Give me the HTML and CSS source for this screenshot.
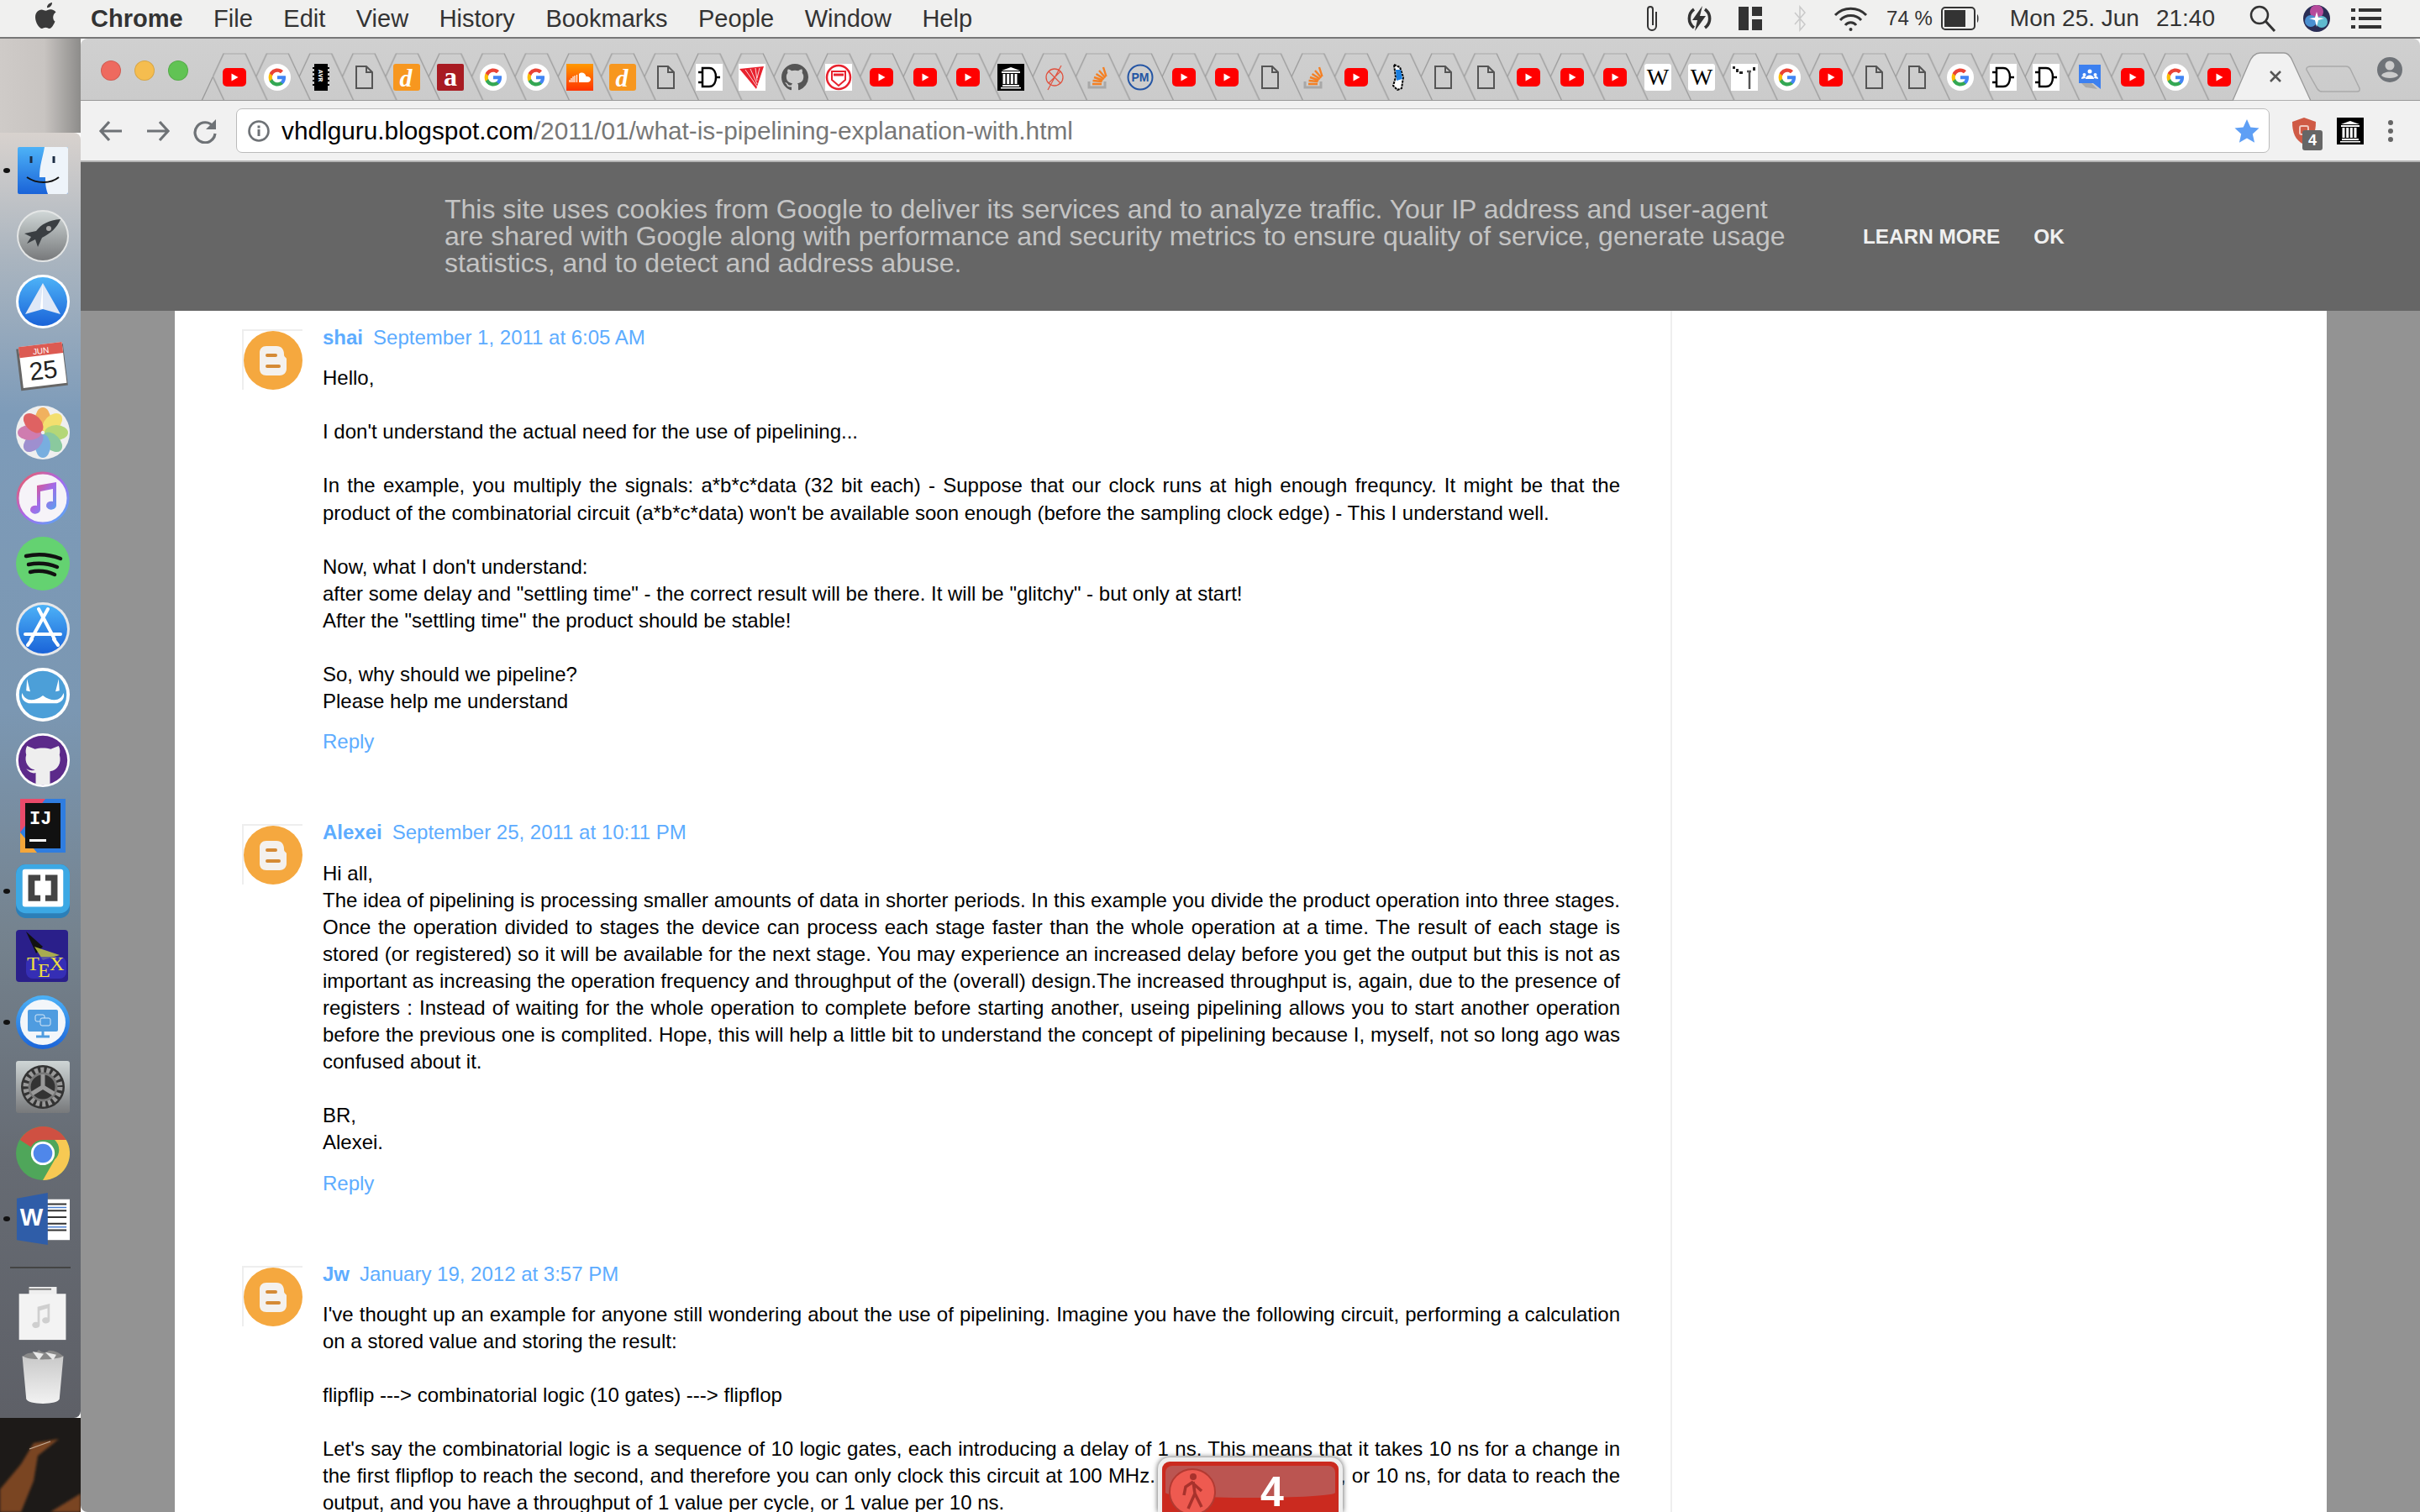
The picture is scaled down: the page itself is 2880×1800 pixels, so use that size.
FILE: index.html
```html
<!DOCTYPE html>
<html>
<head>
  <title>What is pipelining? Explanation with a simple example in VHDL</title>
  <link rel="stylesheet" href="styles.css">
</head>
<body>
  <svg class="defs" width="0" height="0">
    <defs>
      <symbol id="f-yt" viewBox="0 0 32 32"><rect x="2" y="5" width="28" height="22" rx="5" fill="#f00"/><path d="M12.5 11.5l8 4.5-8 4.500z" fill="#fff"/></symbol>
      <symbol id="f-g" viewBox="0 0 48 48"><circle cx="24" cy="24" r="24" fill="#fff"/><g transform="translate(7 7) scale(.71)"><path fill="#4285F4" d="M45.120 24.500c0-1.560-.14-3.060-.4-4.500H24v8.510h11.840c-.51 2.750-2.060 5.080-4.390 6.640v5.520h7.110c4.160-3.830 6.560-9.470 6.560-15.170z"/><path fill="#34A853" d="M24 46c5.940 0 10.920-1.970 14.560-5.330l-7.110-5.520c-1.970 1.320-4.490 2.100-7.450 2.100-5.730 0-10.580-3.870-12.310-9.070H4.340v5.700C7.960 41.070 15.400 46 24 46z"/><path fill="#FBBC05" d="M11.690 28.180C11.250 26.860 11 25.450 11 24s.25-2.860.69-4.180v-5.700H4.340C2.850 17.090 2 20.450 2 24c0 3.550.85 6.910 2.340 9.880l7.350-5.700z"/><path fill="#EA4335" d="M24 10.750c3.230 0 6.130 1.110 8.410 3.290l6.310-6.310C34.910 4.180 29.930 2 24 2 15.400 2 7.960 6.930 4.340 14.120l7.350 5.700c1.730-5.200 6.580-9.070 12.310-9.070z"/></g></symbol>
      <symbol id="f-chip" viewBox="0 0 32 32"><rect x="8" y="0" width="16" height="32" fill="#000"/><path d="M6 4h2v2H6zM6 9h2v2H6zM6 14h2v2H6zM6 19h2v2H6zM6 24h2v2H6zM24 4h2v2h-2zM24 9h2v2h-2zM24 14h2v2h-2zM24 19h2v2h-2zM24 24h2v2h-2z" fill="#000"/><text transform="translate(12.500 7) rotate(90)" class="chip-text">AVR</text></symbol>
      <symbol id="f-file" viewBox="0 0 32 32"><path d="M7 3h12l7 7v19H7zM19 3v7h7" fill="none" stroke="#555" stroke-width="2"/></symbol>
      <symbol id="f-d" viewBox="0 0 32 32"><rect width="32" height="32" rx="3" fill="#f7971f"/><text x="15" y="27" class="d-text">d</text></symbol>
      <symbol id="f-a" viewBox="0 0 32 32"><rect width="32" height="32" rx="2" fill="#a81b22"/><text x="16" y="26" class="a-text">a</text></symbol>
      <symbol id="f-sc" viewBox="0 0 32 32"><rect width="32" height="32" fill="url(#sc-grad)"/><path d="M15 12c3-3 8-1 8.500 3 3-.5 5.500 1.500 5.500 3.500S27 22 25 22H15z" fill="#fff"/><path d="M4 19v3M6 17v5M8 15v7M10 14v8M12.500 13v9" stroke="#fff" stroke-width="1.200"/></symbol>
      <symbol id="f-gate" viewBox="0 0 32 32"><rect width="32" height="32" fill="#fff"/><path d="M8 5h8c6 0 8 6 8 11s-2 11-8 11H8zM3 10h5M3 22h5M24 16h5" fill="none" stroke="#000" stroke-width="2.500"/></symbol>
      <symbol id="f-fan" viewBox="0 0 32 32"><rect width="32" height="32" fill="#fff"/><path d="M1 6l29-3-9 27z" fill="#e8222e"/><path d="M8 7l14 20M14 6l8 18M20 5l2 15M25 5l-3 12" stroke="#fff" stroke-width=".8"/></symbol>
      <symbol id="f-gh" viewBox="0 0 16 16"><path fill="#555" d="M8 0C3.580 0 0 3.580 0 8c0 3.540 2.290 6.530 5.470 7.590.4.07.55-.17.55-.38 0-.19-.01-.82-.01-1.490-2.010.37-2.530-.49-2.690-.94-.09-.23-.48-.94-.82-1.130-.28-.15-.68-.52-.01-.53.63-.01 1.080.58 1.230.82.72 1.210 1.870.87 2.330.66.07-.52.28-.87.51-1.070-1.780-.2-3.640-.89-3.640-3.950 0-.87.31-1.590.82-2.150-.08-.2-.36-1.020.08-2.120 0 0 .67-.21 2.200.82.64-.18 1.320-.27 2-.27.68 0 1.360.09 2 .27 1.530-1.040 2.200-.82 2.200-.82.44 1.100.16 1.920.08 2.120.51.56.82 1.270.82 2.150 0 3.070-1.870 3.750-3.650 3.950.29.25.54.73.54 1.480 0 1.070-.01 1.930-.01 2.200 0 .21.15.46.55.38A8.013 8.013 0 0016 8c0-4.420-3.580-8-8-8z"/></symbol>
      <symbol id="f-shield" viewBox="0 0 32 32"><rect width="32" height="32" fill="#fff"/><circle cx="16" cy="16" r="14" fill="none" stroke="#e8222e" stroke-width="2.500"/><path d="M8 9h16v10l-8 7-8-7z" fill="none" stroke="#e8222e" stroke-width="2"/><path d="M10 13h12" stroke="#e8222e" stroke-width="3"/></symbol>
      <symbol id="f-arch" viewBox="0 0 32 32"><rect width="32" height="32" fill="#000"/><path d="M5 8l11-4 11 4zM5 9h22v2H5zM6 25h20v2H6zM4 28h24v1.500H4z" fill="#fff"/><path d="M8 12v12M12.700 12v12M17.300 12v12M22 12v12" stroke="#fff" stroke-width="3"/></symbol>
      <symbol id="f-no" viewBox="0 0 32 32"><circle cx="16" cy="16" r="10" fill="none" stroke="#e0523f" stroke-width="1.300"/><path d="M9 9l14 14M23 9L9 23M24 2L8 31" fill="none" stroke="#e0523f" stroke-width="1.200"/></symbol>
      <symbol id="f-so" viewBox="0 0 32 32"><path d="M6 21v7h19v-7" fill="none" stroke="#a8a8a8" stroke-width="3"/><path d="M10 24h11M10.500 20l11 1M12 16l10.500 3.500M14.500 12l9.500 6M18 8l7.500 8.500M23 4l3.500 11" stroke="#f48024" stroke-width="2.400"/></symbol>
      <symbol id="f-pm" viewBox="0 0 32 32"><circle cx="16" cy="16" r="14.500" fill="none" stroke="#2455a4" stroke-width="2"/><text x="16" y="21" class="pm-text">PM</text></symbol>
      <symbol id="f-pen" viewBox="0 0 32 32"><path d="M10 1l7 3 4 12-2 13-5 2-5-5 3-10z" fill="#fff" stroke="#000" stroke-width="2" stroke-dasharray="3 1"/><path d="M12 7h6l2 11-7 2z" fill="#1a7fe0"/></symbol>
      <symbol id="f-w" viewBox="0 0 32 32"><rect width="32" height="32" rx="3" fill="#fff"/><text x="16" y="25" class="w-text">W</text></symbol>
      <symbol id="f-t" viewBox="0 0 32 32"><rect width="32" height="32" fill="#fff"/><path d="M2 3h3v3H2zM6 6h3v4H6zM10 9h4v3h-4zM26 4h3v4h-3z" fill="#222"/><path d="M19 9h5M22 9v21" stroke="#555" stroke-width="2.500"/></symbol>
      <symbol id="f-mark" viewBox="0 0 32 32"><path d="M3 1h26v29l-9-7H3z" fill="#3c80f0"/><path d="M6 23h12l7 7-14-2z" fill="#aaa"/><circle cx="16" cy="9" r="2.500" fill="#fff"/><circle cx="9.500" cy="13" r="2" fill="#fff"/><circle cx="22.500" cy="13" r="2" fill="#fff"/><path d="M11 18c0-6 10-6 10 0zM6 18c0-4 5-4 5-1M26 18c0-4-5-4-5-1" fill="#fff"/></symbol>
      <symbol id="blogger" viewBox="0 0 70 70"><circle cx="35" cy="35" r="35" fill="#f5a83f"/><path d="M27 18h12c6 0 9 4 9 10 0 3 2 3 3 5v12c0 5-4 8-8 8H27c-5 0-8-3-8-8V26c0-5 3-8 8-8z" fill="#f4f1ee"/><path d="M28 29h10M28 42h14" stroke="#d58a35" stroke-width="4" stroke-linecap="round"/></symbol>
      <linearGradient id="sc-grad" x1="0" y1="0" x2="0" y2="1"><stop offset="0" stop-color="#f90"/><stop offset="1" stop-color="#f30"/></linearGradient>
      <linearGradient id="blue-grad" x1="0" y1="0" x2="0" y2="1"><stop offset="0" stop-color="#4db2f7"/><stop offset="1" stop-color="#1a63d8"/></linearGradient>
      <linearGradient id="grey-grad" x1="0" y1="0" x2="0" y2="1"><stop offset="0" stop-color="#cfd6d6"/><stop offset="1" stop-color="#77797b"/></linearGradient>
      <linearGradient id="ring-grad" x1="0" y1="0" x2="1" y2="1"><stop offset="0" stop-color="#f25d5d"/><stop offset=".5" stop-color="#a667ee"/><stop offset="1" stop-color="#4db2f7"/></linearGradient>
      <linearGradient id="note-grad" x1="0" y1="0" x2="1" y2="1"><stop offset="0" stop-color="#ee4c6a"/><stop offset=".5" stop-color="#a36be8"/><stop offset="1" stop-color="#4fa9f0"/></linearGradient>
      <linearGradient id="bin-grad" x1="0" y1="0" x2="0" y2="1"><stop offset="0" stop-color="#c9c9c9"/><stop offset="1" stop-color="#f2f2f2"/></linearGradient>
      <pattern id="tab-cell" x="157.300" y="17.500" width="51.350" height="57" patternUnits="userSpaceOnUse"><path d="M0 28L13 0H38.500L64.700 56M-12.850 0L13.350 56" fill="none" stroke="#999" stroke-width="1.300"/></pattern>
      <filter id="soft"><feGaussianBlur stdDeviation="1.500"/></filter>
    </defs>
  </svg>

  <div class="menubar">
    <svg class="apple" viewBox="0 0 28 32"><path fill="#3a3a3a" d="M20 0c.3 3-2.600 6.400-6 6.200C13.700 3 16.800.3 20 0zM23.300 23c-1.200 3-4 8-6.500 8-1.800 0-2.400-1.200-4.500-1.200S9.500 31 7.800 31C5 31 0 24 0 17.500 0 12 3.500 8.500 7.500 8.500c2 0 3.700 1.300 4.900 1.300s3-1.500 5.500-1.500c1.200 0 4.600.2 6.600 3.300-4.600 3-3.900 9.400-.7 11.400z"/></svg>
    <b class="menu-app">Chrome</b>
    <span>File</span><span>Edit</span><span>View</span><span>History</span><span>Bookmarks</span><span>People</span><span>Window</span><span>Help</span>
    <div class="status">
      <svg class="st-clip" viewBox="0 0 16 32"><path d="M13 9v17a5 5 0 01-10 0V6a3 3 0 016 0v19" transform="translate(0 -1)" fill="none" stroke="#333" stroke-width="2"/></svg>
      <svg class="st-bolt" viewBox="0 0 33 32"><path d="M10 5a13.500 13.500 0 000 22M23 5a13.500 13.500 0 010 22" fill="none" stroke="#333" stroke-width="3.500"/><path d="M20 1L8 18h6l-3 13 13-18h-7z" fill="#333"/></svg>
      <svg class="st-grid" viewBox="0 0 28 28"><path d="M0 0h12v28H0zM16 0h12v11H16zM16 15h12v13H16z" fill="#333"/></svg>
      <svg class="st-bt" viewBox="0 0 18 32"><path d="M3 9l12 14-6 7V2l6 7L3 23" fill="none" stroke="#c9c9c9" stroke-width="1.500"/></svg>
      <svg class="st-wifi" viewBox="0 0 41 30"><path d="M2 11a26 26 0 0137 0M8 17a17 17 0 0125 0M14 23a8 8 0 0113 0" fill="none" stroke="#333" stroke-width="3"/><circle cx="20.500" cy="28" r="2" fill="#333"/></svg>
      <span class="st-pct">74 %</span>
      <svg class="st-batt" viewBox="0 0 46 28"><rect x="1" y="1" width="39" height="26" rx="4" fill="none" stroke="#333" stroke-width="2"/><rect x="4" y="4" width="25" height="20" fill="#333"/><path d="M43 9c2 1 2 9 0 10z" fill="#333"/></svg>
      <span class="st-date">Mon 25. Jun</span>
      <span class="st-time">21:40</span>
      <svg class="st-search" viewBox="0 0 32 32"><circle cx="12" cy="12" r="10" fill="none" stroke="#333" stroke-width="2.500"/><path d="M19 19l11 12" stroke="#333" stroke-width="3"/></svg>
      <svg class="st-siri" viewBox="0 0 32 32"><circle cx="16" cy="16" r="16" fill="#2a2d55"/><circle cx="16" cy="8" r="8" fill="#b64a9b"/><circle cx="9" cy="19" r="7" fill="#4a8fd0"/><circle cx="22" cy="20" r="7" fill="#5fbad0"/><path d="M16 8l2 7 7 1-7 2-2 8-2-8-7-2 7-1z" fill="#fff"/></svg>
      <svg class="st-list" viewBox="0 0 36 28"><path d="M0 2h5v4H0zM9 2h27v4H9zM0 12h5v4H0zM9 12h27v4H9zM0 22h5v4H0zM9 22h27v4H9z" fill="#333"/></svg>
    </div>
  </div>

  <div class="desktop">
    <div class="side">
      <div class="wall-top"></div>
      <div class="dock">
        <div class="dock-item on"><svg class="finder" viewBox="0 0 60 56"><rect width="60" height="56" rx="2" fill="url(#blue-grad)"/><path d="M32 0h26a2 2 0 012 2v52a2 2 0 01-2 2H36c-3-8-3-14-3-20h-7c0-14 4-24 6-36z" fill="#eef4fa"/><path d="M16 11v8M43 11v8" stroke="#1c2d44" stroke-width="3"/><path d="M11 36c12 8 28 8 38 0" fill="none" stroke="#111" stroke-width="2"/></svg></div>
        <div class="dock-item"><svg viewBox="0 0 64 64"><circle cx="32" cy="32" r="31" fill="#e4e6e6"/><circle cx="32" cy="32" r="29" fill="url(#grey-grad)"/><path d="M53 12c-14 1-23 6-29 14l-14 3 8 4-5 8 10-5 3 9 5-11c10-5 18-12 22-22z" fill="#3a3e42"/><circle cx="39" cy="23" r="3" fill="#aaa"/></svg></div>
        <div class="dock-item"><svg viewBox="0 0 64 64"><circle cx="32" cy="32" r="32" fill="#fff"/><circle cx="32" cy="32" r="29" fill="url(#blue-grad)"/><path d="M32 10l21 37-21-6-21 6z" fill="#dfe8f7"/><path d="M32 10v31l-3-1z" fill="#fff"/></svg></div>
        <div class="dock-item"><svg viewBox="0 0 64 64"><g transform="rotate(-7 32 32)"><rect x="3" y="7" width="56" height="50" fill="#666"/><rect x="6" y="5" width="52" height="49" fill="#fff"/><rect x="6" y="5" width="52" height="13" fill="#dc5a52"/><text x="32" y="16" class="cal-mon">JUN</text><text x="32" y="46" class="cal-day">25</text></g></svg></div>
        <div class="dock-item"><svg viewBox="0 0 64 64"><circle cx="32" cy="32" r="32" fill="#efefef"/><g opacity=".8"><ellipse cx="32" cy="16" rx="9" ry="14" fill="#f2a23a"/><ellipse cx="32" cy="16" rx="9" ry="14" fill="#f5dc50" transform="rotate(45 32 32)"/><ellipse cx="32" cy="16" rx="9" ry="14" fill="#a6d25a" transform="rotate(90 32 32)"/><ellipse cx="32" cy="16" rx="9" ry="14" fill="#72c08a" transform="rotate(135 32 32)"/><ellipse cx="32" cy="16" rx="9" ry="14" fill="#5b9fdc" transform="rotate(180 32 32)"/><ellipse cx="32" cy="16" rx="9" ry="14" fill="#8a78c8" transform="rotate(225 32 32)"/><ellipse cx="32" cy="16" rx="9" ry="14" fill="#c860a0" transform="rotate(270 32 32)"/><ellipse cx="32" cy="16" rx="9" ry="14" fill="#dc4040" transform="rotate(315 32 32)"/></g></svg></div>
        <div class="dock-item"><svg viewBox="0 0 64 64"><circle cx="32" cy="32" r="30" fill="#f6f3f8" stroke="url(#ring-grad)" stroke-width="3"/><path d="M25 17l23-4v28a6 5 0 11-4-5V21l-15 3v22a6 5 0 11-4-5z" fill="url(#note-grad)"/></svg></div>
        <div class="dock-item"><svg viewBox="0 0 64 64"><circle cx="32" cy="32" r="32" fill="#64d271"/><path d="M12 23c14-3 28-2 41 3M15 33c11-2 24-1 34 3M17 42c9-2 20-1 29 3" fill="none" stroke="#111" stroke-width="4.500" stroke-linecap="round"/></svg></div>
        <div class="dock-item"><svg viewBox="0 0 64 64"><circle cx="32" cy="32" r="32" fill="#e6e8ea"/><circle cx="32" cy="32" r="29" fill="url(#blue-grad)"/><path d="M38 8L18 44M27 8l19 36M11 38h42M19 44l-5 7M45 44l5 7" fill="none" stroke="#fff" stroke-width="4" stroke-linecap="round"/></svg></div>
        <div class="dock-item"><svg viewBox="0 0 68 68"><circle cx="34" cy="34" r="34" fill="#fff"/><circle cx="34" cy="34" r="30" fill="#4c9fd8"/><path d="M8 32c3 10 14 12 26 3 12 9 23 7 26-3 2 4 0 11-8 13H16C8 43 6 36 8 32zM14 14l4 16-5-1zM54 14l-4 16 5-1z" fill="#fff"/></svg></div>
        <div class="dock-item"><svg viewBox="0 0 68 68"><circle cx="34" cy="34" r="34" fill="#fff"/><circle cx="34" cy="34" r="31" fill="#5c2a8a"/><path d="M14 16l10 4c6-2 14-2 20 0l10-4c2 4 2 8 1 11 3 10-2 20-12 21v17H25V50c-3 1-8 0-12-5 4 2 8 3 11 1C16 45 10 36 13 27c-1-3-1-7 1-11z" fill="#eee"/></svg></div>
        <div class="dock-item"><svg viewBox="0 0 54 64"><rect width="54" height="64" fill="#2f7de0"/><path d="M0 0h30L0 40z" fill="#ea4a6a"/><path d="M0 40L20 64H0z" fill="#f4a63a"/><rect x="6" y="5" width="42" height="54" fill="#111"/><text x="11" y="30" class="ij-text">IJ</text><rect x="11" y="48" width="20" height="3" fill="#fff"/></svg></div>
        <div class="dock-item on"><svg viewBox="0 0 66 66"><rect width="66" height="66" rx="12" fill="#2c7fb8"/><rect width="66" height="60" rx="12" fill="#3ca8e4"/><rect x="8" y="6" width="50" height="46" rx="3" fill="#fff"/><path d="M30 13H15v32h15v-7h-7V20h7zM36 13h15v32H36v-7h7V20h-7z" fill="#444"/></svg></div>
        <div class="dock-item"><svg viewBox="0 0 64 64"><rect width="62" height="62" rx="4" fill="#2a1f8a"/><path d="M12 2l20 18-8 8z" fill="#111"/><path d="M22 20l30 10-20 6z" fill="#c8d040" opacity=".8"/><rect x="12" y="32" width="48" height="26" rx="8" fill="#3a34c8" opacity=".7"/><text x="13" y="48" class="tex-text">T</text><text x="26" y="56" class="tex-text">E</text><text x="40" y="48" class="tex-text">X</text></svg></div>
        <div class="dock-item on"><svg viewBox="0 0 64 64"><circle cx="32" cy="32" r="32" fill="url(#blue-grad)"/><circle cx="32" cy="32" r="27" fill="#f3f6fa"/><rect x="14" y="17" width="36" height="26" rx="2" fill="#4f9ce0"/><path d="M32 43v5M24 49h16" stroke="#4f9ce0" stroke-width="3"/><rect x="23" y="23" width="11" height="8" rx="2" fill="none" stroke="#d9e8f6"/><rect x="29" y="27" width="12" height="9" rx="2" fill="#4f9ce0" stroke="#d9e8f6"/></svg></div>
        <div class="dock-item"><svg viewBox="0 0 64 64"><rect width="64" height="62" rx="3" fill="url(#grey-grad)"/><circle cx="32" cy="31" r="26" fill="#333"/><circle cx="32" cy="31" r="20" fill="none" stroke="#999" stroke-width="7" stroke-dasharray="4 3"/><circle cx="32" cy="31" r="16" fill="none" stroke="#777" stroke-width="3"/><path d="M32 31V16M32 31L19 39M32 31l13 8" stroke="#999" stroke-width="5"/></svg></div>
        <div class="dock-item"><svg viewBox="0 0 68 68"><circle cx="34" cy="34" r="34" fill="#4fa65a"/><path d="M34 0a34 34 0 0129.500 17H34a17 17 0 00-15 9L5 17A34 34 0 0134 0z" fill="#cf5042"/><path d="M63.500 17A34 34 0 0134 68l15-26a17 17 0 00-0-25z" fill="#f7c953"/><circle cx="34" cy="34" r="15" fill="#fff"/><circle cx="34" cy="34" r="12" fill="#4f87ea"/></svg></div>
        <div class="dock-item on"><svg viewBox="0 0 66 64"><rect x="34" y="8" width="32" height="50" fill="#fff"/><path d="M38 14h24M38 22h24M38 30h24M38 38h24M38 46h24" stroke="#333" stroke-width="2"/><path d="M38 18h24M38 42h24" stroke="#4a7fd0" stroke-width="1.500"/><path d="M1 7l38-7v64L1 58z" fill="#2f5da8"/><text x="19" y="40" class="word-text">W</text></svg></div>
        <div class="dock-sep"></div>
        <div class="dock-item short"><svg class="folder" viewBox="0 0 62 70"><rect x="13" y="0" width="36" height="12" fill="#eee"/><path d="M12 3h30" stroke="#777" stroke-width="2"/><rect y="9" width="61" height="60" fill="#f3f3f3"/><path d="M24 26l16-4v22a5 4 0 11-3-4V28l-10 3v19a5 4 0 11-3-4z" fill="#cfcfcf"/></svg></div>
        <div class="dock-item short"><svg class="bin" viewBox="0 0 54 68"><path d="M1 8h52l-5 54c-1 4-10 6-21 6S7 66 6 62z" fill="url(#bin-grad)"/><path d="M2 8c8-7 14-2 20-8 3 3 8 5 12 1 6-1 14 3 19 7-8 5-43 6-51 0z" fill="#888"/><path d="M14 2l8 11 6-8zM30 3l10 10 4-7z" fill="#e9e9e9"/></svg></div>
      </div>
      <div class="wall-bottom">
        <svg viewBox="0 0 96 112" preserveAspectRatio="none"><g filter="url(#soft)"><path d="M70 25L40 30 25 55 0 85v27h25l15-37 5-30z" fill="#7a4420"/><path d="M96 90l-36 22h36z" fill="#7a4420"/></g><path d="M35 37l25-9" stroke="#c8b09a" stroke-width="1.200"/></svg>
      </div>
    </div>

    <div class="window">
      <div class="strip">
        <svg class="strip-art" width="2784" height="74">
          <rect x="157.300" y="17" width="2413.450" height="57" fill="url(#tab-cell)"/>
          <path d="M157.300 45.500L144 74" fill="none" stroke="#999" stroke-width="1.300"/>
          <path d="M2561 74L2580 30Q2585 17 2594 17H2622Q2628 17 2632 26L2654 74Z" fill="#f1f1f1" stroke="#999" stroke-width="1.300"/>
          <path d="M2655 33H2696Q2699 33 2701 36L2712 59Q2713 63 2709 63H2668Q2664 63 2662 60L2649 37Q2648 33 2655 33Z" fill="none" stroke="#aaa" stroke-width="1.500"/>
          <path d="M2606 39l12 12M2618 39l-12 12" stroke="#555" stroke-width="2.500"/>
          <circle cx="2748" cy="37" r="15" fill="#6f7378"/>
          <circle cx="2748" cy="32" r="5.500" fill="#ccc"/>
          <path d="M2738 44c2-6 18-6 20 0-4 4-16 4-20 0z" fill="#ccc"/>
        </svg>
        <div class="lights"><i class="red"></i><i class="amber"></i><i class="green"></i></div>
        <div class="tabs">
          <svg><use href="#f-yt"/></svg><svg><use href="#f-g"/></svg><svg><use href="#f-chip"/></svg><svg><use href="#f-file"/></svg><svg><use href="#f-d"/></svg><svg><use href="#f-a"/></svg><svg><use href="#f-g"/></svg><svg><use href="#f-g"/></svg><svg><use href="#f-sc"/></svg><svg><use href="#f-d"/></svg>
          <svg><use href="#f-file"/></svg><svg><use href="#f-gate"/></svg><svg><use href="#f-fan"/></svg><svg><use href="#f-gh"/></svg><svg><use href="#f-shield"/></svg><svg><use href="#f-yt"/></svg><svg><use href="#f-yt"/></svg><svg><use href="#f-yt"/></svg><svg><use href="#f-arch"/></svg><svg><use href="#f-no"/></svg>
          <svg><use href="#f-so"/></svg><svg><use href="#f-pm"/></svg><svg><use href="#f-yt"/></svg><svg><use href="#f-yt"/></svg><svg><use href="#f-file"/></svg><svg><use href="#f-so"/></svg><svg><use href="#f-yt"/></svg><svg><use href="#f-pen"/></svg><svg><use href="#f-file"/></svg><svg><use href="#f-file"/></svg>
          <svg><use href="#f-yt"/></svg><svg><use href="#f-yt"/></svg><svg><use href="#f-yt"/></svg><svg><use href="#f-w"/></svg><svg><use href="#f-w"/></svg><svg><use href="#f-t"/></svg><svg><use href="#f-g"/></svg><svg><use href="#f-yt"/></svg><svg><use href="#f-file"/></svg><svg><use href="#f-file"/></svg>
          <svg><use href="#f-g"/></svg><svg><use href="#f-gate"/></svg><svg><use href="#f-gate"/></svg><svg><use href="#f-mark"/></svg><svg><use href="#f-yt"/></svg><svg><use href="#f-g"/></svg><svg><use href="#f-yt"/></svg>
        </div>
      </div>

      <div class="toolbar">
        <svg class="nav" viewBox="0 0 30 30"><path d="M28 15H3M13 4L3 15l10 11" fill="none" stroke="#6e7276" stroke-width="3.200"/></svg>
        <svg class="nav" viewBox="0 0 30 30"><path d="M2 15h25M17 4l10 11-10 11" fill="none" stroke="#6e7276" stroke-width="3.200"/></svg>
        <svg class="nav" viewBox="0 0 30 30"><path d="M25 10a12 12 0 10 2 8" fill="none" stroke="#6e7276" stroke-width="3.200"/><path d="M28 1v12H16z" fill="#6e7276"/></svg>
        <div class="address">
          <svg class="info" viewBox="0 0 26 26"><circle cx="13" cy="13" r="11.500" fill="none" stroke="#6e7276" stroke-width="2.600"/><path d="M11.500 11h3v8h-3zM11.500 6.500h3v3h-3z" fill="#6e7276"/></svg>
          <span class="host">vhdlguru.blogspot.com</span><span class="path">/2011/01/what-is-pipelining-explanation-with.html</span>
          <svg class="star" viewBox="0 0 30 30"><path d="M15 1l4.300 9.600 10.200 1-7.700 6.900 2.300 10.200L15 23.400 5.900 28.700l2.300-10.200L.5 11.600l10.200-1z" fill="#5e9ff5"/></svg>
        </div>
        <div class="ext">
          <svg class="ublock" viewBox="0 0 32 34"><path d="M16 1l14 5c0 12-3 22-14 27C5 28 2 18 2 6z" fill="#cf5a45"/><rect x="11" y="11" width="10" height="10" rx="2" fill="none" stroke="#f0c8c0" stroke-width="2"/></svg>
          <span class="ext-badge">4</span>
        </div>
        <svg class="ext-arch"><use href="#f-arch"/></svg>
        <svg class="kebab" viewBox="0 0 12 32"><circle cx="6" cy="6" r="3" fill="#666"/><circle cx="6" cy="16" r="3" fill="#666"/><circle cx="6" cy="26" r="3" fill="#666"/></svg>
      </div>

      <div class="viewport">
        <div class="cookie">
          <p class="cookie-text">This site uses cookies from Google to deliver its services and to analyze traffic. Your IP address and user-agent are shared with Google along with performance and security metrics to ensure quality of service, generate usage statistics, and to detect and address abuse.</p>
          <a class="cookie-btn">LEARN MORE</a>
          <a class="cookie-btn">OK</a>
        </div>
        <div class="page">
          <div class="main">

            <div class="comment">
              <svg class="avatar"><use href="#blogger"/></svg>
              <div class="comment-body">
                <div class="comment-head"><b>shai</b><span>September 1, 2011 at 6:05 AM</span></div>
                <p>Hello,<br><br>I don't understand the actual need for the use of pipelining...<br><br>In the example, you multiply the signals: a*b*c*data (32 bit each) - Suppose that our clock runs at high enough frequncy. It might be that the product of the combinatorial circuit (a*b*c*data) won't be available soon enough (before the sampling clock edge) - This I understand well.<br><br>Now, what I don't understand:<br>after some delay and "settling time" - the correct result will be there. It will be "glitchy" - but only at start!<br>After the "settling time" the product should be stable!<br><br>So, why should we pipeline?<br>Please help me understand</p>
                <a class="reply">Reply</a>
              </div>
            </div>

            <div class="comment">
              <svg class="avatar"><use href="#blogger"/></svg>
              <div class="comment-body">
                <div class="comment-head"><b>Alexei</b><span>September 25, 2011 at 10:11 PM</span></div>
                <p>Hi all,<br>The idea of pipelining is processing smaller amounts of data in shorter periods. In this example you divide the product operation into three stages. Once the operation divided to stages the device can process each stage faster than the whole operation at a time. The result of each stage is stored (or registered) so it will be available for the next stage. You may experience an increased delay before you get the output but this is not as important as increasing the operation frequency and throughput of the (overall) design.The increased throughput is, again, due to the presence of registers : Instead of waiting for the whole operation to complete before starting another, useing pipelining allows you to start another operation before the previous one is complited. Hope, this will help a little bit to understand the concept of pipelining because I, myself, not so long ago was confused about it.<br><br>BR,<br>Alexei.</p>
                <a class="reply">Reply</a>
              </div>
            </div>

            <div class="comment">
              <svg class="avatar"><use href="#blogger"/></svg>
              <div class="comment-body">
                <div class="comment-head"><b>Jw</b><span>January 19, 2012 at 3:57 PM</span></div>
                <p>I've thought up an example for anyone still wondering about the use of pipelining. Imagine you have the following circuit, performing a calculation on a stored value and storing the result:<br><br>flipflip ---&gt; combinatorial logic (10 gates) ---&gt; flipflop<br><br>Let's say the combinatorial logic is a sequence of 10 logic gates, each introducing a delay of 1 ns. This means that it takes 10 ns for a change in the first flipflop to reach the second, and therefore you can only clock this circuit at 100 MHz. The delay is 1 cycle, or 10 ns, for data to reach the output, and you have a throughput of 1 value per cycle, or 1 value per 10 ns.</p>
              </div>
            </div>

          </div>
        </div>
        <div class="counter">
          <svg class="walker" viewBox="0 0 60 60"><circle cx="30" cy="30" r="27" fill="#ee5a50" stroke="#b23a32" stroke-width="2"/><circle cx="31" cy="12" r="4" fill="#a8322c"/><path d="M31 18l-9 6-2 10M31 18l2 14-8 18M33 32l8 16M32 21l9 8" fill="none" stroke="#a8322c" stroke-width="3.500"/></svg>
          <span class="counter-num">4</span>
        </div>
      </div>
    </div>
  </div>
</body>
</html>
```
FILE: styles.css
```css
html, body {
  margin: 0;
  padding: 0;
  height: 100%;
  overflow: hidden;
}
body {
  font-family: "Liberation Sans", Arial, sans-serif;
  color: #000;
  display: flex;
  flex-direction: column;
}
.defs {
  position: absolute;
}

/* small svg labels */
.chip-text { font: bold 8px "Liberation Mono", monospace; fill: #fff; }
.d-text { font: italic bold 30px "Liberation Serif", serif; fill: #fff; text-anchor: middle; }
.a-text { font: bold 32px "Liberation Serif", serif; fill: #fff; text-anchor: middle; }
.pm-text { font: bold 14px "Liberation Sans", sans-serif; fill: #2455a4; text-anchor: middle; }
.w-text { font: 28px "Liberation Serif", serif; fill: #000; text-anchor: middle; }
.cal-mon { font: 10px "Liberation Sans", sans-serif; fill: #fff; text-anchor: middle; }
.cal-day { font: 30px "Liberation Sans", sans-serif; fill: #222; text-anchor: middle; }
.ij-text { font: bold 22px "Liberation Mono", monospace; fill: #fff; }
.tex-text { font: 24px "Liberation Serif", serif; fill: #f0e040; }
.word-text { font: bold 30px "Liberation Sans", sans-serif; fill: #fff; text-anchor: middle; }

/* mac menu bar */
.menubar {
  flex: 0 0 44px;
  display: flex;
  align-items: center;
  gap: 36.500px;
  padding-left: 42px;
  background: #f0f0ef;
  font-size: 29px;
  color: #333;
}
.apple {
  width: 28px;
  height: 32px;
  margin-top: -6px;
  margin-right: 1.500px;
}
.menu-app {
  color: #333;
}
.status {
  margin-left: auto;
  display: flex;
  align-items: center;
  font-size: 28px;
  padding-right: 46px;
}
.st-clip { width: 16px; height: 32px; }
.st-bolt { width: 33px; height: 32px; margin-left: 32px; }
.st-grid { width: 28px; height: 28px; margin-left: 30px; }
.st-bt { width: 18px; height: 32px; margin-left: 36px; }
.st-wifi { width: 41px; height: 30px; margin-left: 31px; }
.st-pct { margin-left: 22px; font-size: 24px; }
.st-batt { width: 46px; height: 28px; margin-left: 10px; }
.st-date { margin-left: 36px; }
.st-time { margin-left: 20px; }
.st-search { width: 32px; height: 32px; margin-left: 41px; }
.st-siri { width: 32px; height: 32px; margin-left: 32px; }
.st-list { width: 36px; height: 28px; margin-left: 25px; }

/* desktop */
.desktop {
  flex: 1;
  display: flex;
  min-height: 0;
  border-top: 2px solid #777;
}
.side {
  flex: 0 0 96px;
  display: flex;
  flex-direction: column;
}
.wall-top {
  flex: 0 0 112px;
  background: linear-gradient(90deg, #cfcbc8 0%, #c8c4c1 55%, #8d8c8a 100%);
}
.dock {
  flex: 0 0 1530px;
  box-sizing: border-box;
  padding-top: 6px;
  display: flex;
  flex-direction: column;
  background: linear-gradient(180deg, #d8d2ce 0%, #a9b4bf 10%, #7d9bb9 22%, #7b97b2 45%, #75838f 62%, #666b73 80%, #5e6067 100%);
  border-radius: 0 8px 8px 0;
}
.dock-item {
  flex: 0 0 78px;
  box-sizing: border-box;
  padding-left: 6px;
  display: flex;
  align-items: center;
  justify-content: center;
  position: relative;
}
.dock-item svg {
  width: 64px;
  height: 64px;
}
.dock-item .finder {
  width: 60px;
  height: 56px;
}
.dock-item.on::before {
  content: "";
  position: absolute;
  left: 4px;
  top: 36px;
  width: 8px;
  height: 6px;
  border-radius: 50%;
  background: #111;
}
.dock-sep {
  height: 2px;
  margin: 18px 12px 16px;
  background: #444;
}
.dock-item.short {
  flex-basis: 75px;
}
.wall-bottom {
  flex: 1;
  background: #1d1a18;
  min-height: 0;
}
.wall-bottom svg {
  display: block;
  width: 100%;
  height: 100%;
}

/* browser window */
.window {
  flex: 1;
  min-width: 0;
  display: flex;
  flex-direction: column;
  border-radius: 8px 8px 0 8px;
  overflow: hidden;
}
.strip {
  flex: 0 0 74px;
  position: relative;
  display: flex;
  background: linear-gradient(180deg, #d0d0d0, #cbcbcb);
  border-bottom: 1px solid #999;
  box-sizing: border-box;
}
.strip-art {
  position: absolute;
  left: 0;
  top: 0;
}
.lights {
  display: flex;
  gap: 16px;
  padding: 26px 0 0 24px;
}
.lights i {
  width: 22px;
  height: 22px;
  border-radius: 50%;
  border: 1px solid rgba(0, 0, 0, .12);
}
.lights .red { background: #ee6a5f; }
.lights .amber { background: #f5bd4f; }
.lights .green { background: #61c354; }
.tabs {
  position: relative;
  display: flex;
  gap: 19.35px;
  margin: 30px 0 0 39px;
}
.tabs svg {
  width: 32px;
  height: 32px;
}
.toolbar {
  flex: 0 0 73px;
  box-sizing: border-box;
  display: flex;
  align-items: center;
  gap: 26px;
  padding-left: 21px;
  padding-right: 28px;
  background: #f1f1f1;
  border-bottom: 2px solid #b5b5b5;
}
.nav {
  width: 30px;
  height: 30px;
}
.address {
  flex: 0 0 2420px;
  box-sizing: border-box;
  height: 53px;
  margin-left: -4px;
  display: flex;
  align-items: center;
  padding-left: 13px;
  background: #fff;
  border: 1px solid #bbb;
  border-radius: 7px;
  font-size: 29.800px;
}
.info {
  width: 26px;
  height: 26px;
  margin-right: 14px;
}
.host {
  color: #000;
}
.path {
  color: #777;
}
.star {
  width: 30px;
  height: 30px;
  margin-left: auto;
  margin-right: 11px;
}
.ext {
  position: relative;
  width: 32px;
  height: 34px;
  margin-left: -1px;
}
.ublock {
  width: 32px;
  height: 34px;
}
.ext-badge {
  position: absolute;
  left: 14px;
  top: 16px;
  width: 24px;
  height: 24px;
  border-radius: 3px;
  background: #666;
  color: #fff;
  font: bold 18px/24px "Liberation Sans", sans-serif;
  text-align: center;
}
.ext-arch {
  width: 32px;
  height: 32px;
  margin-left: -3px;
}
.kebab {
  width: 12px;
  height: 32px;
}
.viewport {
  flex: 1;
  min-height: 0;
  position: relative;
  display: flex;
  flex-direction: column;
  background: #939393;
}

/* cookie notice */
.cookie {
  flex: 0 0 177px;
  display: flex;
  align-items: center;
  background: #666;
  padding-left: 433px;
}
.cookie-text {
  flex: 0 0 1605px;
  margin: -2px 83px 0 0;
  font-size: 32px;
  line-height: 32px;
  color: #c4c4c4;
}
.cookie-btn {
  font-size: 24.300px;
  font-weight: bold;
  color: #f0f0f0;
  margin-right: 40px;
}

/* blog page */
.page {
  flex: 1;
  min-height: 0;
  margin: 0 111px 0 112px;
  background: #fff;
  overflow: hidden;
}
.main {
  width: 1782px;
  height: 100%;
  box-sizing: border-box;
  padding: 16px 60px 0 80px;
  border-right: 2px solid #eee;
}
.comment {
  display: flex;
  gap: 24px;
  margin-bottom: 76px;
}
.avatar {
  flex: 0 0 72px;
  width: 72px;
  height: 72px;
  margin-top: 6px;
  border-top: 2px solid #eee;
  border-left: 2px solid #eee;
  box-sizing: border-box;
}
.comment-body {
  flex: 1;
  min-width: 0;
  font-size: 24px;
  line-height: 32.100px;
}
.comment-head {
  display: flex;
  gap: 12px;
  color: #5dacff;
  margin-bottom: 16px;
}
.comment-body p {
  margin: 0 0 16px;
  text-align: justify;
}
.reply {
  color: #5dacff;
}

/* floating red counter */
.counter {
  position: absolute;
  left: 1282px;
  top: 1542px;
  width: 220px;
  height: 65px;
  box-sizing: border-box;
  display: flex;
  align-items: flex-start;
  border: 5px solid #eee;
  border-bottom: 0;
  border-radius: 14px 14px 0 0;
  background: #cb2a1f;
  box-shadow: 0 0 6px #555;
}
.counter::before {
  content: "";
  position: absolute;
  left: 4px;
  right: 4px;
  top: 5px;
  height: 38px;
  border-radius: 8px 8px 50% 50% / 8px 8px 6px 6px;
  background: #bb5551;
}
.walker {
  position: relative;
  width: 60px;
  height: 60px;
  margin: 6px 0 0 6px;
}
.counter-num {
  position: relative;
  margin: 16px 0 0 51px;
  font-size: 50px;
  line-height: 40px;
  font-weight: bold;
  color: #fff;
}
```
